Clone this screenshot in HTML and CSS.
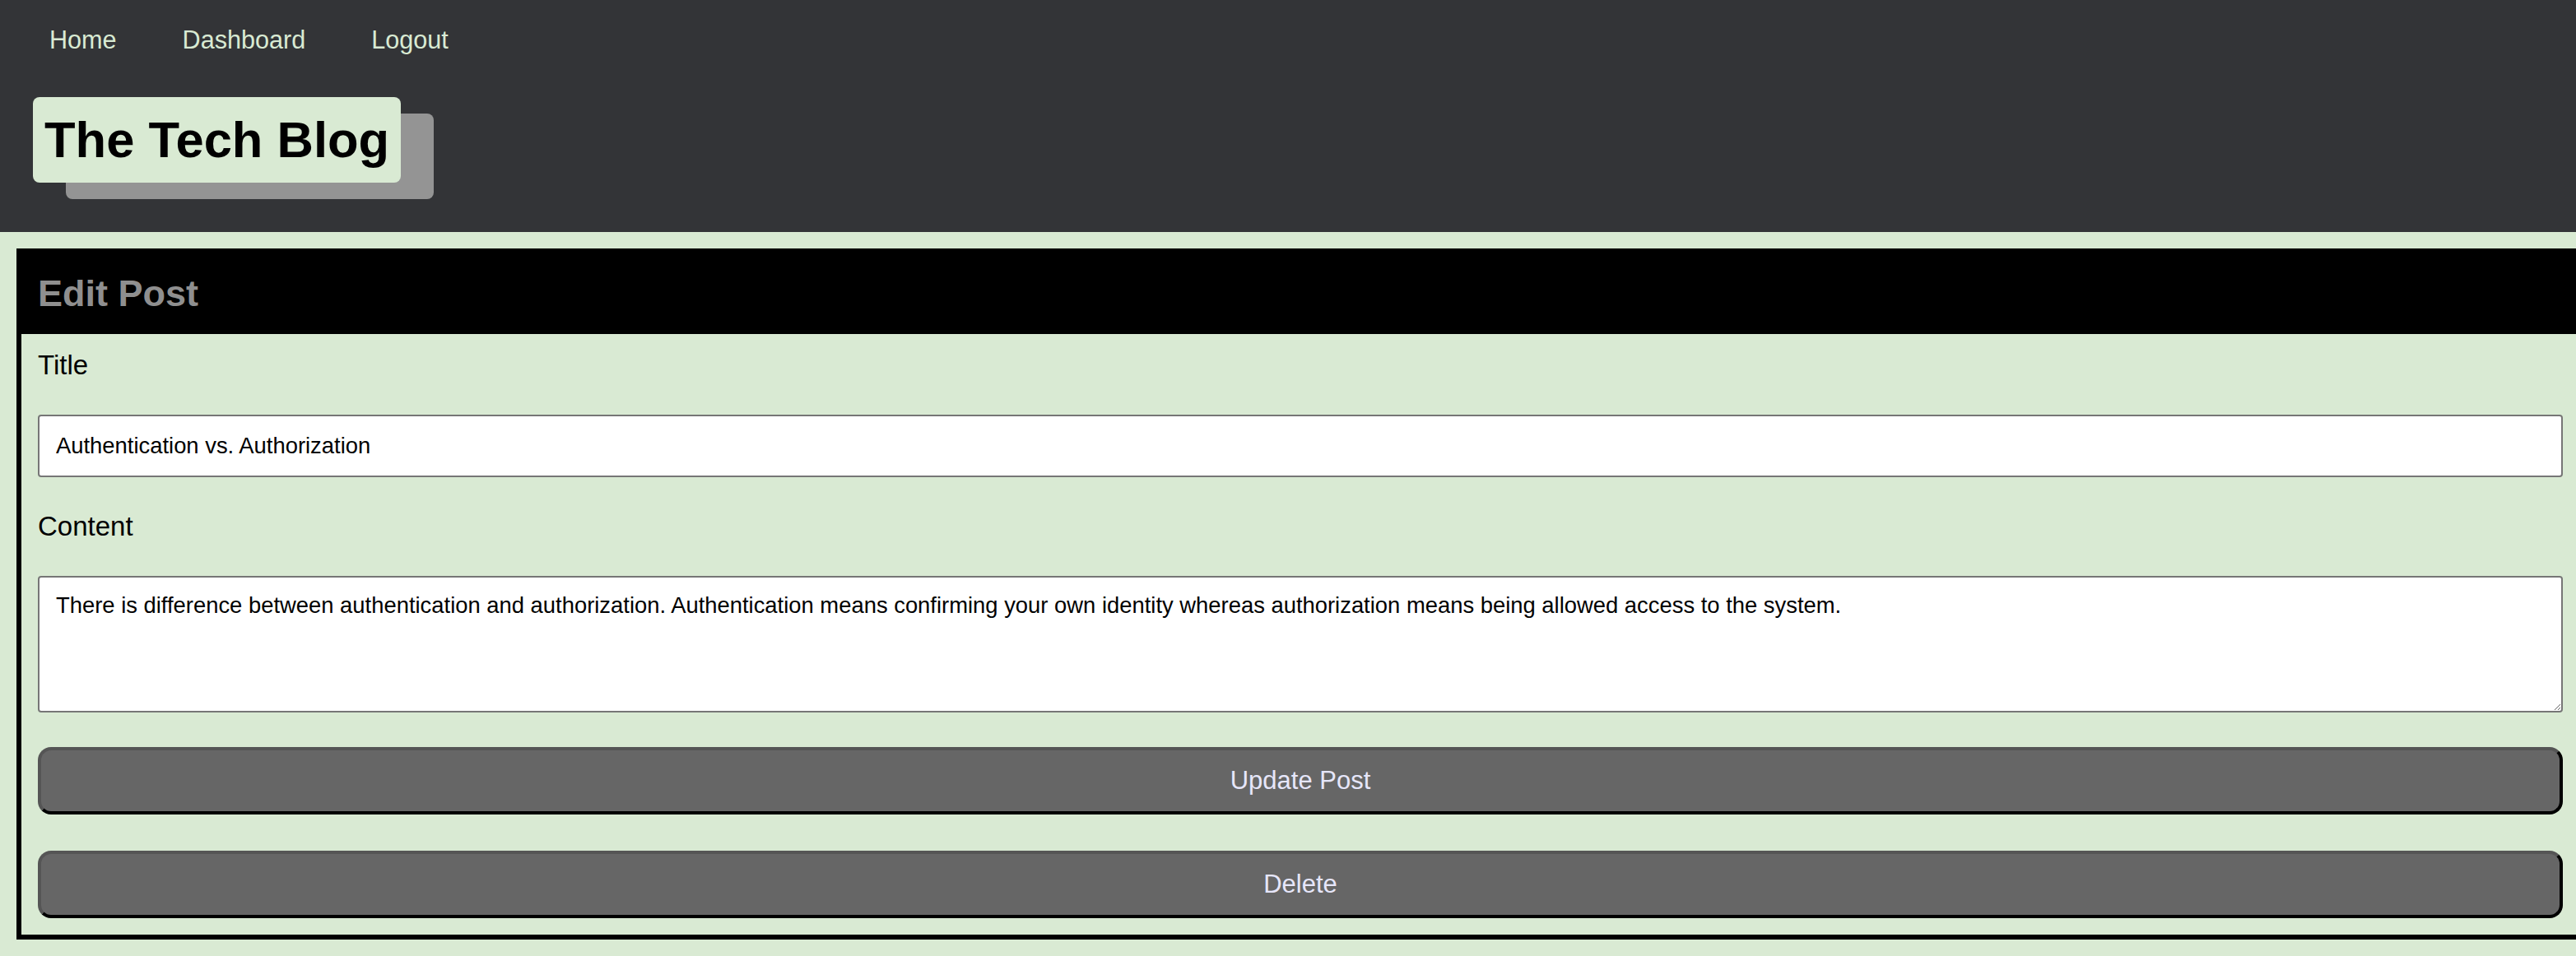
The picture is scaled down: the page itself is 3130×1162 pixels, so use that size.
FILE: index.html
```html
<!DOCTYPE html>
<html lang="en">
<head>
<meta charset="utf-8">
<title>The Tech Blog</title>
<link rel="stylesheet" href="styles.css">
</head>
<body>
<header class="site-header">
  <nav class="nav">
    <a class="nav-link" href="#">Home</a>
    <a class="nav-link" href="#">Dashboard</a>
    <a class="nav-link" href="#">Logout</a>
  </nav>
  <h1 class="logo">The Tech Blog</h1>
</header>
<main class="main">
  <section class="card">
    <h2 class="card-header">Edit Post</h2>
    <form class="card-body">
      <label class="field-label" for="title">Title</label>
      <input class="field-input" id="title" type="text" value="Authentication vs. Authorization">
      <label class="field-label" for="content">Content</label>
      <textarea class="field-textarea" id="content">There is difference between authentication and authorization. Authentication means confirming your own identity whereas authorization means being allowed access to the system.</textarea>
      <button class="btn btn-update" type="button">Update Post</button>
      <button class="btn btn-delete" type="button">Delete</button>
    </form>
  </section>
</main>
</body>
</html>
```
FILE: styles.css
```css
html, body {
  margin: 0;
  padding: 0;
}
body {
  background: #d9ead3;
  font-family: "Liberation Sans", Arial, sans-serif;
  color: #000;
  overflow: hidden;
}
.site-header {
  background: #333437;
  padding: 0 20px 60px;
}
.nav {
  display: flex;
  align-items: center;
  height: 96px;
}
.nav-link {
  color: #d9ead3;
  text-decoration: none;
  font-size: 30.6px;
  margin: 0 40px;
}
.logo {
  display: inline-block;
  margin: 22px 0 0 20px;
  background: #d9ead3;
  color: #000;
  font-size: 61.5px;
  font-weight: bold;
  line-height: 104px;
  height: 104px;
  padding: 0 14px;
  border-radius: 8px;
  box-shadow: 40px 20px 0 #949494;
}
.main {
  padding: 20px 0 20px 20px;
  overflow: hidden;
}
.card {
  box-sizing: border-box;
  width: calc(100% + 10px);
  border: 6px solid #000;
}
.card-header {
  margin: 0;
  background: #000;
  color: #8f8f8f;
  font-size: 45px;
  font-weight: bold;
  height: 98px;
  line-height: 98px;
  padding: 0 20px;
}
.card-body {
  display: flex;
  flex-direction: column;
  padding: 18px 20px 20px;
}
.field-label {
  font-size: 33px;
  line-height: 40px;
  margin-bottom: 40px;
}
.field-input,
.field-textarea {
  box-sizing: border-box;
  width: 100%;
  border: 2px solid #767676;
  border-radius: 4px;
  background: #fff;
  font-family: "Liberation Sans", Arial, sans-serif;
  font-size: 27.4px;
  color: #000;
  margin: 0 0 40px;
}
.field-input {
  height: 76px;
  padding: 0 20px;
}
.field-textarea {
  height: 166px;
  padding: 18px 20px;
  margin-bottom: 42px;
  resize: vertical;
}
.btn {
  box-sizing: border-box;
  width: 100%;
  height: 82px;
  background: #666;
  color: #e6e6fa;
  font-family: "Liberation Sans", Arial, sans-serif;
  font-size: 31px;
  border: 4px solid;
  border-color: #555 #000 #000 #555;
  border-radius: 16px;
}
.btn-update {
  margin-bottom: 44px;
}
```
